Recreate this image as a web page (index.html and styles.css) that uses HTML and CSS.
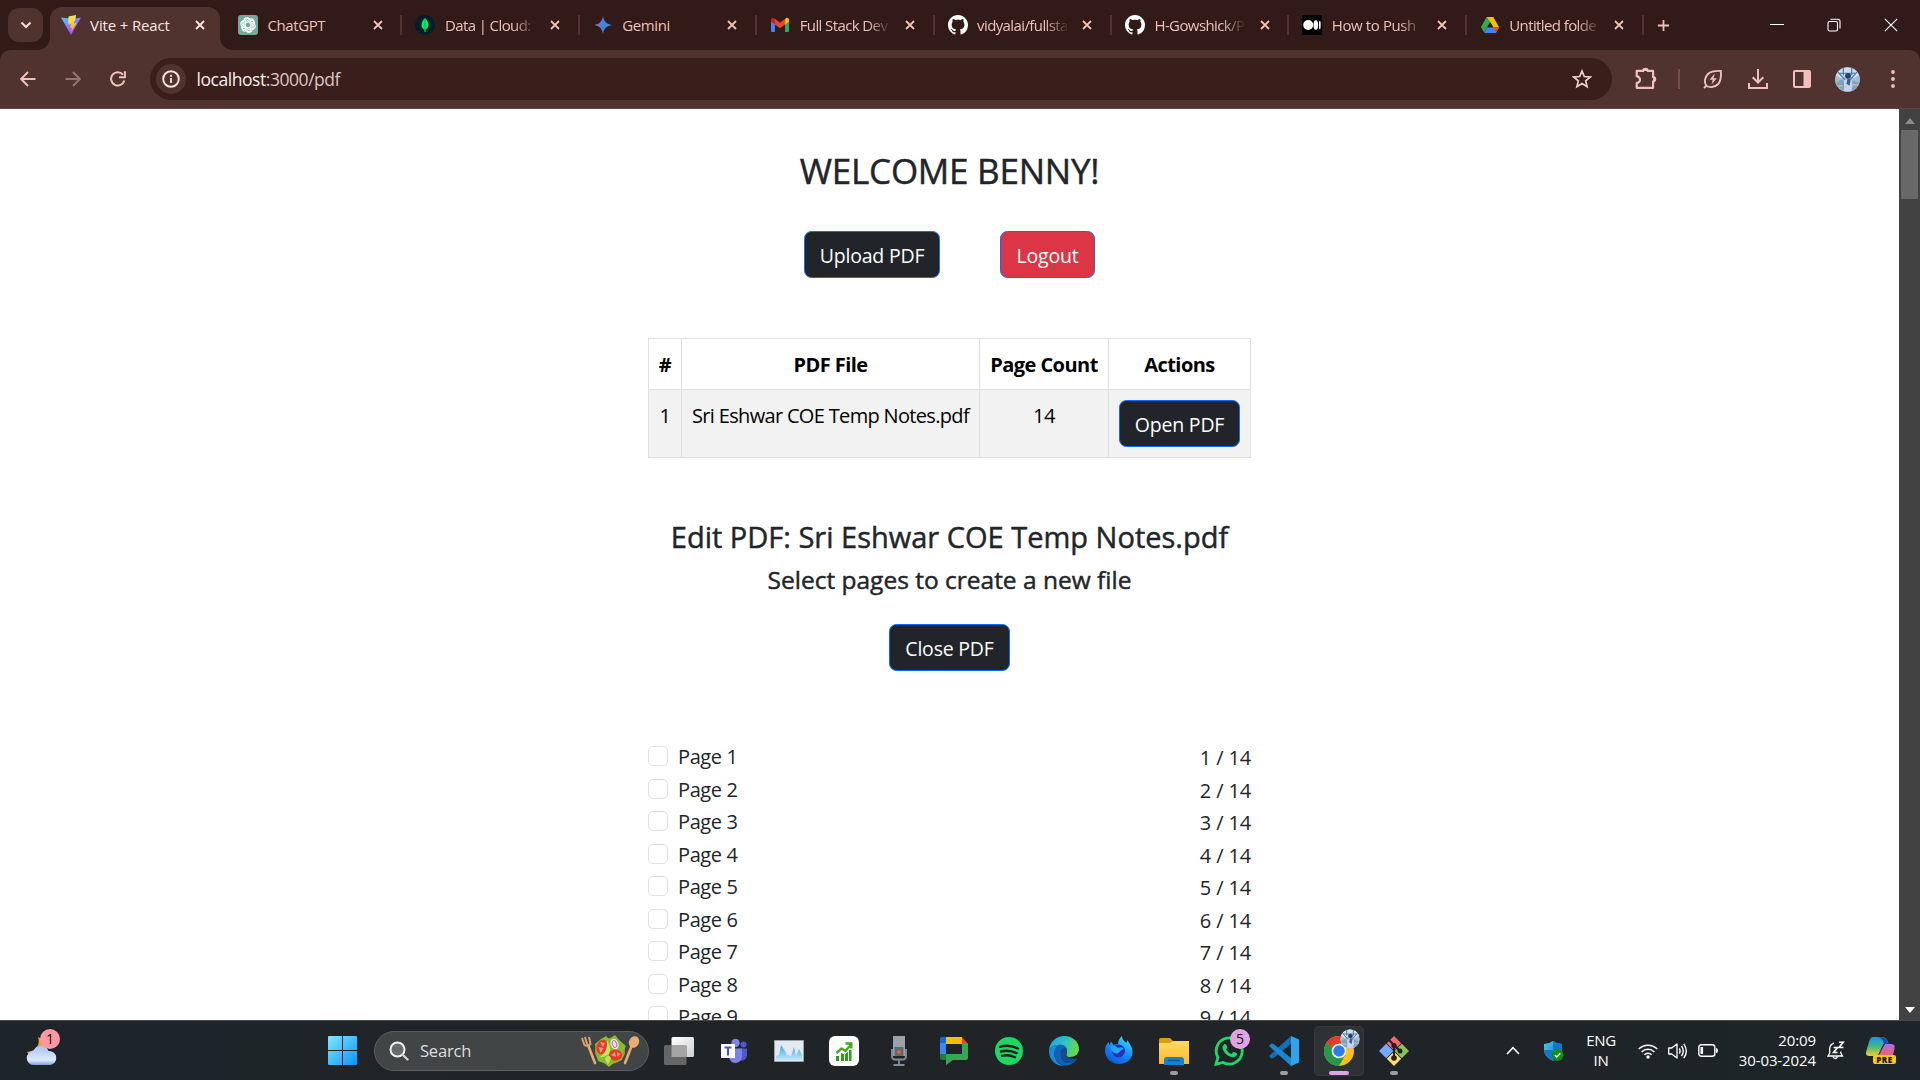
FILE: index.html
```html
<!DOCTYPE html>
<html lang="en">
<head>
<meta charset="utf-8">
<title>Vite + React</title>
<link rel="stylesheet" href="styles.css">
</head>
<body>
<svg class="defs" width="0" height="0" aria-hidden="true">
  <defs>
    <linearGradient id="viteA" x1="0" y1="0" x2="0.6" y2="1"><stop offset="0" stop-color="#41d1ff"/><stop offset="1" stop-color="#bd34fe"/></linearGradient>
    <linearGradient id="viteB" x1="0" y1="0" x2="0" y2="1"><stop offset="0" stop-color="#ffea63"/><stop offset="1" stop-color="#ffa800"/></linearGradient>
    <linearGradient id="gem" x1="0" y1="0" x2="1" y2="0"><stop offset="0" stop-color="#a06bc0"/><stop offset=".5" stop-color="#4a7fdc"/><stop offset="1" stop-color="#1ba1e3"/></linearGradient>
    <linearGradient id="win" x1="0" y1="0" x2="1" y2="1"><stop offset="0" stop-color="#7eeaff"/><stop offset="1" stop-color="#0a92fb"/></linearGradient>
    <linearGradient id="cloud" x1="0" y1="0" x2="0" y2="1"><stop offset="0" stop-color="#a4c2f4"/><stop offset=".75" stop-color="#dfe9fb"/><stop offset="1" stop-color="#7f9fdc"/></linearGradient>
    <linearGradient id="edgeA" x1="0" y1="0" x2="1" y2=".4"><stop offset="0" stop-color="#1f9fdc"/><stop offset=".55" stop-color="#2cc3c6"/><stop offset="1" stop-color="#64d84a"/></linearGradient>
    <linearGradient id="fox" x1=".8" y1="0" x2=".2" y2="1"><stop offset="0" stop-color="#37e3ff"/><stop offset=".5" stop-color="#168cf8"/><stop offset="1" stop-color="#0b52d8"/></linearGradient>
    <linearGradient id="folder" x1="0" y1="0" x2="0" y2="1"><stop offset="0" stop-color="#ffd965"/><stop offset="1" stop-color="#fbb92b"/></linearGradient>
    <linearGradient id="panel" x1="0" y1="0" x2="1" y2="1"><stop offset="0" stop-color="#ffffff"/><stop offset="1" stop-color="#cfcfcf"/></linearGradient>
    <linearGradient id="wave" x1="0" y1="0" x2="0" y2="1"><stop offset="0" stop-color="#3aa6e4"/><stop offset="1" stop-color="#b9e9fd"/></linearGradient>
    <linearGradient id="copA" x1="0" y1="0" x2="0" y2="1"><stop offset="0" stop-color="#1b8fe8"/><stop offset=".5" stop-color="#41b98a"/><stop offset="1" stop-color="#f3cf2b"/></linearGradient>
    <linearGradient id="copB" x1="0" y1="0" x2="0" y2="1"><stop offset="0" stop-color="#a96cf0"/><stop offset="1" stop-color="#f2606c"/></linearGradient>
    <linearGradient id="shield" x1="0" y1="0" x2="1" y2="1"><stop offset="0" stop-color="#4fc8f5"/><stop offset="1" stop-color="#0866b8"/></linearGradient>
    <symbol id="x" viewBox="0 0 10 10"><path d="M1 1l8 8M9 1L1 9" stroke="currentColor" stroke-width="1.8" fill="none"/></symbol>
    <symbol id="github" viewBox="0 0 16 16"><path fill="#fff" d="M8 0C3.58 0 0 3.58 0 8c0 3.54 2.29 6.53 5.47 7.59.4.07.55-.17.55-.38 0-.19-.01-.82-.01-1.49-2.01.37-2.53-.49-2.69-.94-.09-.23-.48-.94-.82-1.13-.28-.15-.68-.52-.01-.53.63-.01 1.08.58 1.23.82.72 1.21 1.87.87 2.33.66.07-.52.28-.87.51-1.07-1.78-.2-3.64-.89-3.64-3.95 0-.87.31-1.59.82-2.15-.08-.2-.36-1.02.08-2.12 0 0 .67-.21 2.2.82.64-.18 1.32-.27 2-.27s1.36.09 2 .27c1.53-1.04 2.2-.82 2.2-.82.44 1.1.16 1.92.08 2.12.51.56.82 1.27.82 2.15 0 3.07-1.87 3.75-3.65 3.95.29.25.54.73.54 1.48 0 1.07-.01 1.93-.01 2.2 0 .21.15.46.55.38A8.01 8.01 0 0 0 16 8c0-4.42-3.58-8-8-8z"/></symbol>
    <symbol id="avatar" viewBox="0 0 24 24">
      <circle cx="12" cy="12" r="12" fill="#a3bdd6"/>
      <path d="M1 8a12 12 0 0 1 22 0l-5 3-6-4-6 4z" fill="#cfe0ec"/>
      <path d="M3 5l8 9M21 5l-8 9M8 1v7M16 1v7M4 6h16" stroke="#4477a8" stroke-width="1.1"/>
      <path d="M1 15l5-3 4 2-2 8a12 12 0 0 1-7-7zM23 15l-6-2-2 4 2 6a12 12 0 0 0 6-8z" fill="#7d9fc8"/>
      <path d="M8.500 13l3.500-2 4 2 1 5-2 5H9z" fill="#c6d6e8"/>
      <circle cx="12.500" cy="8.500" r="2.800" fill="#27406c"/>
      <path d="M12 11l3 1-1 6-3-2z" fill="#3d5c96"/>
      <path d="M3 18h4M17 17h5" stroke="#c6c08e" stroke-width="1.600"/>
    </symbol>
  </defs>
</svg>

<header class="chrome">
  <div class="tabstrip">
    <button class="tab-search"><svg width="12" height="8" viewBox="0 0 12 8"><path d="M1.500 1.500L6 6l4.500-4.500" fill="none" stroke="currentColor" stroke-width="2"/></svg></button>
    <nav class="tabs">
      <div class="tab active">
        <svg class="fav" viewBox="0 0 20 20"><path d="M0 2.500l8 1 3 .5 9-1.500L10 20z" fill="url(#viteA)"/><path d="M15 0L7.500 1.500 7 9.500l3-.5-1 4 2-.5-1 4.500 5.500-9-3 .500 2-4.500z" fill="url(#viteB)"/></svg>
        <span class="title">Vite + React</span><svg class="close"><use href="#x"/></svg>
      </div>
      <div class="tab">
        <svg class="fav" viewBox="0 0 20 20"><rect width="20" height="20" rx="3" fill="#74aa9c"/><g fill="none" stroke="#fff" stroke-width="1.100"><path id="kn" d="M7.200 11.600V6.200a3 3 0 0 1 5.600-1.300M7.200 6.800l4.600-2.600a3 3 0 0 1 4.200 3.600"/><use href="#kn" transform="rotate(60 10 10)"/><use href="#kn" transform="rotate(120 10 10)"/><use href="#kn" transform="rotate(180 10 10)"/><use href="#kn" transform="rotate(240 10 10)"/><use href="#kn" transform="rotate(300 10 10)"/></g></svg>
        <span class="title">ChatGPT</span><svg class="close"><use href="#x"/></svg>
      </div>
      <div class="tab">
        <svg class="fav" viewBox="0 0 20 20"><circle cx="10" cy="10" r="10" fill="#001e2b"/><path d="M10 3c2.500 2.500 3.700 4.800 3.500 7.300-.2 2.200-1.500 3.700-3 4.700V17h-1v-2c-1.600-1-2.900-2.700-3-4.700C6.400 7.800 7.600 5.500 10 3z" fill="#00ed64"/><path d="M10 4v12.500" stroke="#00a848" stroke-width=".8"/></svg>
        <span class="title fade tight">Data | Cloud:</span><svg class="close"><use href="#x"/></svg>
      </div>
      <div class="tab">
        <svg class="fav" viewBox="0 0 20 20"><path d="M10 1c.9 5.500 3.500 8.100 9 9-5.500.9-8.100 3.500-9 9-.9-5.500-3.500-8.100-9-9 5.500-.9 8.100-3.500 9-9z" fill="url(#gem)"/></svg>
        <span class="title">Gemini</span><svg class="close"><use href="#x"/></svg>
      </div>
      <div class="tab">
        <svg class="fav" viewBox="0 0 20 20"><path d="M1 5v11a1 1 0 0 0 1 1h3V8z" fill="#4285f4"/><path d="M19 5v11a1 1 0 0 1-1 1h-3V8z" fill="#34a853"/><path d="M15 4.500v5l4-3V4.800c0-2-2.200-2.500-3.400-1.500z" fill="#fbbc04"/><path d="M1 6.500V4.800c0-2 2.200-2.500 3.400-1.500L5 4v5.500z" fill="#c5221f"/><path d="M5 3.800l5 3.900 5-3.900v5.700l-5 3.800-5-3.800z" fill="#ea4335"/></svg>
        <span class="title fade tight">Full Stack Dev</span><svg class="close"><use href="#x"/></svg>
      </div>
      <div class="tab">
        <svg class="fav"><use href="#github"/></svg>
        <span class="title fade tight">vidyalai/fullsta</span><svg class="close"><use href="#x"/></svg>
      </div>
      <div class="tab">
        <svg class="fav"><use href="#github"/></svg>
        <span class="title fade tight">H-Gowshick/P</span><svg class="close"><use href="#x"/></svg>
      </div>
      <div class="tab">
        <svg class="fav" viewBox="0 0 20 20"><rect width="20" height="20" rx="1" fill="#000"/><circle cx="6.200" cy="10" r="5" fill="#fff"/><ellipse cx="13.800" cy="10" rx="2.300" ry="4.700" fill="#fff"/><ellipse cx="17.800" cy="10" rx=".9" ry="4.200" fill="#fff"/></svg>
        <span class="title fade">How to Push</span><svg class="close"><use href="#x"/></svg>
      </div>
      <div class="tab">
        <svg class="fav" viewBox="0 0 20 20"><path d="M6.700 2h6.600l-3.300 5.600L4.200 17.500.9 12z" fill="#34a853"/><path d="M7 2h6.300l5.800 10.300h-5.600z" fill="#fbbc04"/><path d="M4.200 18l3-5.700h11.900L15.800 18z" fill="#4285f4"/><path d="M13.500 12.300h5.600L15.800 18z" fill="#ea4335"/><path d="M10 7.600l2.700 4.700H7.300z" fill="#311a17"/></svg>
        <span class="title fade tight">Untitled folde</span><svg class="close"><use href="#x"/></svg>
      </div>
    </nav>
    <svg class="new-tab" viewBox="0 0 14 14"><path d="M7 1v12M1 7h12" stroke="currentColor" stroke-width="1.900"/></svg>
    <div class="win-controls">
      <svg width="14" height="14" viewBox="0 0 14 14"><path d="M0 6.500h14" stroke="#fff"/></svg>
      <svg width="14" height="14" viewBox="0 0 14 14"><rect x="1" y="3.500" width="9.500" height="9.500" rx="1.500" fill="none" stroke="#fff" stroke-width="1.100"/><path d="M3.500 1.200H11a2 2 0 0 1 2 2v7.300" fill="none" stroke="#fff" stroke-width="1.100"/></svg>
      <svg width="14" height="14" viewBox="0 0 14 14"><path d="M.8.8l12.400 12.400M13.200.8L.8 13.200" stroke="#fff" stroke-width="1.100"/></svg>
    </div>
  </div>
  <div class="toolbar">
    <svg class="nav-ic" viewBox="0 0 16 16"><path d="M15.500 8H1.500M8 1L1.200 8 8 15" fill="none" stroke="currentColor" stroke-width="2"/></svg>
    <svg class="nav-ic dim" viewBox="0 0 16 16"><path d="M.5 8h14M8 1l6.800 7L8 15" fill="none" stroke="currentColor" stroke-width="2"/></svg>
    <svg class="nav-ic" viewBox="0 0 16 16"><path d="M14.300 9.500A6.700 6.700 0 1 1 13 3.600M14.900.3v5.900H9" fill="none" stroke="currentColor" stroke-width="2"/></svg>
    <div class="omnibox">
      <span class="site-info"><svg width="18" height="18" viewBox="0 0 18 18"><circle cx="9" cy="9" r="7.800" fill="none" stroke="currentColor" stroke-width="1.900"/><path d="M9 8v5M9 4.800v1.900" stroke="currentColor" stroke-width="1.800"/></svg></span>
      <span class="url"><b>localhost</b>:3000/pdf</span>
      <svg class="star" viewBox="0 0 20 20"><path d="M10 2l2.300 5.500 6 .5-4.600 3.900 1.400 5.800L10 14.600l-5.100 3.100 1.400-5.800L1.700 8l6-.5z" fill="none" stroke="currentColor" stroke-width="1.700"/></svg>
    </div>
    <svg class="ext" viewBox="0 0 22 22"><path d="M2.500 4.500H8.500a2 2 0 0 1 4 0H17.500V10.200a1.900 1.900 0 0 1 0 3.800V20H2.500v-4.500a3 3 0 0 0 0-6z" fill="none" stroke="currentColor" stroke-width="2" stroke-linejoin="round"/><path d="M8.300 4.500a2.200 2.200 0 0 1 4.400 0zM17.500 10a2.100 2.100 0 0 1 0 4.200z" fill="currentColor"/></svg>
    <i class="tb-sep"></i>
    <svg class="ic20 leaf" viewBox="0 0 20 20"><path d="M3.500 17c-3-4-1.500-9 1.500-12 3-2.700 8-3.300 12.800-3 .500 5 .2 9.800-2.600 13-3 3-7.700 4-11.700 2zM1 19l2.500-2.500" fill="none" stroke="currentColor" stroke-width="1.900"/><path d="M11.800 4.500L6.500 10.800h3.200L8.500 15.500l5.300-6.300h-3.300z" fill="currentColor"/></svg>
    <svg class="ic20 down" viewBox="0 0 20 20"><path d="M10 0v13M4.700 8.200L10 13.500l5.300-5.300M1 14v5h18v-5" fill="none" stroke="currentColor" stroke-width="2"/></svg>
    <svg class="ic18 side" viewBox="0 0 18 18"><rect x="1" y="1" width="16" height="16" rx="1" fill="none" stroke="currentColor" stroke-width="2"/><path d="M10.500 1H17v16h-6.500z" fill="currentColor"/></svg>
    <svg class="profile"><use href="#avatar"/></svg>
    <svg class="dots" viewBox="0 0 4 18"><circle cx="2" cy="2" r="1.900"/><circle cx="2" cy="9" r="1.900"/><circle cx="2" cy="16" r="1.900"/></svg>
  </div>
</header>

<section class="viewport">
  <main class="page">
    <h2 class="welcome">WELCOME BENNY!</h2>
    <div class="actions">
      <button class="btn dark w-upload">Upload PDF</button>
      <button class="btn danger w-logout">Logout</button>
    </div>
    <table class="files">
      <colgroup><col class="c-num"><col class="c-file"><col class="c-count"><col class="c-act"></colgroup>
      <thead><tr><th>#</th><th>PDF File</th><th>Page Count</th><th>Actions</th></tr></thead>
      <tbody><tr><td>1</td><td class="fname">Sri Eshwar COE Temp Notes.pdf</td><td>14</td><td class="act"><button class="btn dark w-open">Open PDF</button></td></tr></tbody>
    </table>
    <h4 class="edit-title">Edit PDF: Sri Eshwar COE Temp Notes.pdf</h4>
    <h5 class="edit-sub">Select pages to create a new file</h5>
    <button class="btn dark w-open close-pdf">Close PDF</button>
    <ul class="pages">
      <li><i class="check"></i><span>Page 1</span><em>1 / 14</em></li>
      <li><i class="check"></i><span>Page 2</span><em>2 / 14</em></li>
      <li><i class="check"></i><span>Page 3</span><em>3 / 14</em></li>
      <li><i class="check"></i><span>Page 4</span><em>4 / 14</em></li>
      <li><i class="check"></i><span>Page 5</span><em>5 / 14</em></li>
      <li><i class="check"></i><span>Page 6</span><em>6 / 14</em></li>
      <li><i class="check"></i><span>Page 7</span><em>7 / 14</em></li>
      <li><i class="check"></i><span>Page 8</span><em>8 / 14</em></li>
      <li><i class="check"></i><span>Page 9</span><em>9 / 14</em></li>
    </ul>
  </main>
  <aside class="scrollbar">
    <svg width="10" height="6" viewBox="0 0 10 6"><path d="M0 6l5-6 5 6z" fill="#8b8b8b"/></svg>
    <div class="thumb"></div>
    <svg class="sb-down" width="10" height="6" viewBox="0 0 10 6"><path d="M0 0l5 6 5-6z" fill="#fff"/></svg>
  </aside>
</section>

<footer class="taskbar">
  <div class="weather">
    <svg width="32" height="32" viewBox="0 0 32 32"><path d="M12 2c2.500 7-1 14-11 15 4 6 14 6 17-1s-1-12-6-14z" fill="#f7a325"/><path d="M8 30a7 7 0 0 1-.5-14 8 8 0 0 1 15 0A7 7 0 0 1 24 30z" fill="url(#cloud)"/></svg>
    <span class="badge pink">1</span>
  </div>
  <div class="center">
    <svg class="start" viewBox="0 0 29 29"><path d="M1 0h13v14H0V1a1 1 0 0 1 1-1zM15 0h13a1 1 0 0 1 1 1v13H15zM0 15h14v14H1a1 1 0 0 1-1-1zM15 15h14v13a1 1 0 0 1-1 1H15z" fill="url(#win)"/></svg>
    <div class="search">
      <svg width="20" height="20" viewBox="0 0 20 20"><circle cx="8.500" cy="8.500" r="7" fill="#666b6d" stroke="#f0f0f0" stroke-width="2"/><path d="M13.500 13.500l5 5" stroke="#d0d0d0" stroke-width="2.400" stroke-linecap="round"/></svg>
      <span>Search</span>
      <svg class="salad" viewBox="0 0 60 32">
        <path d="M8 10l7 18" stroke="#e5ab70" stroke-width="2.600" stroke-linecap="round"/><path d="M2 3l2.500 7q4 2 6-1L9 2M5 2l2 7" fill="none" stroke="#dba06a" stroke-width="2"/>
        <path d="M52 10l-7 18" stroke="#e5ab70" stroke-width="2.600" stroke-linecap="round"/><ellipse cx="54" cy="7" rx="5" ry="6" transform="rotate(25 54 7)" fill="#e8ae72"/>
        <ellipse cx="30" cy="16" rx="15" ry="13" fill="#b98a4a"/>
        <path d="M15 9l6-5 5-3 3 3 6-4 5 6 6 5-3 6-1 8-7 2-6 5-5-4-6-2-2-8z" fill="#86bd2e"/>
        <ellipse cx="22" cy="12" rx="5.500" ry="7.500" transform="rotate(18 22 12)" fill="#dd3f2b"/><path d="M20 7l5 1-2 4zM18.500 12l5 1-3 5z" fill="#f7947d"/>
        <ellipse cx="35.500" cy="20" rx="6.500" ry="5.500" fill="#dc3c2b"/><path d="M31 20l4-3 1 5zM37 17l3.500 2-3 3z" fill="#f58e78"/>
        <ellipse cx="34.500" cy="9" rx="4" ry="5.500" transform="rotate(-20 34.500 9)" fill="#efdcec"/><ellipse cx="34.500" cy="9" rx="2.200" ry="3.700" transform="rotate(-20 34.500 9)" fill="none" stroke="#a2648f" stroke-width=".8"/>
        <path d="M27 5q5 8 2 14-6 4-9 3 8-5 7-17zM25 24q3-6 6-1l-3 7z" fill="#c8e05a"/>
      </svg>
    </div>
    <div class="apps">
      <span class="app"><svg viewBox="0 0 30 30"><rect x="7.500" y="1" width="22.500" height="20" rx="1.500" fill="url(#panel)"/><rect x="0" y="9" width="22.500" height="20" rx="1.500" fill="#666"/><path d="M7.500 9h15v12h-15z" fill="#a5a5a5"/></svg></span>
      <span class="app"><svg viewBox="0 0 30 30"><circle cx="16.500" cy="7" r="4.200" fill="#7b83eb"/><circle cx="24.500" cy="8.500" r="3" fill="#5059c9"/><path d="M20 12.500h8v7a5 5 0 0 1-8 4z" fill="#5059c9"/><path d="M10 12.500h13V20a6.500 6.500 0 0 1-13 1z" fill="#7b83eb"/><path d="M2 8h14v14H2z" fill="#fff"/><path d="M5.500 11.500h7M9 11.500v8" stroke="#4b53bc" stroke-width="2"/></svg></span>
      <span class="app"><svg viewBox="0 0 30 30"><path d="M.5 4.500h29v21H.5z" fill="#e3eaef" stroke="#99a3ab"/><path d="M2 24v-4l3-1 2-10 4 6 2 4 4 1 3-9 2 9 3-7 3 6v5z" fill="url(#wave)"/></svg></span>
      <span class="app"><svg viewBox="0 0 30 30"><rect width="30" height="30" rx="6" fill="#fff"/><path d="M7 25v-5h3v5zM12 25v-8l3 1v7zM16 25v-7l3-2v9zM20 25V14h2.500v11z" fill="#2f9a1c"/><path d="M7.500 17l5-4.500 4 2.500 5-6M16.500 7.500h5.800v5" fill="none" stroke="#3fae1b" stroke-width="2.400"/></svg></span>
      <span class="app"><svg viewBox="0 0 30 30"><path d="M9 0h12v20H9z" fill="#9aa3ac"/><path d="M10.500 11h9v9h-9z" fill="#5f6974"/><path d="M8 13v7q0 3.500 3 3.500h8q3 0 3-3.500v-7M15 24v5M9.500 29h11" fill="none" stroke="#818b97" stroke-width="1.900"/><circle cx="15" cy="16" r="2" fill="#f4601d"/></svg></span>
      <span class="app"><svg viewBox="0 0 30 30"><path d="M7 1h16v7H7z" fill="#fbbc04"/><path d="M1 3a2 2 0 0 1 2-2h4v7H1z" fill="#1967d2"/><path d="M1 7h6v11H1z" fill="#4285f4"/><path d="M23 1l6 7h-6z" fill="#ea4335"/><path d="M7 18h16V7h6v15a2 2 0 0 1-2 2H14l-7 5z" fill="#34a853"/><path d="M1 18h6v6H3a2 2 0 0 1-2-2z" fill="#188038"/></svg></span>
      <span class="app"><svg viewBox="0 0 30 30"><circle cx="15" cy="15" r="14" fill="#1ed760"/><path d="M6 10.800q9.500-2.800 18 1.700M7 15.500q8-2.200 15.500 1.600M8 19.800q7-1.600 13 1.400" fill="none" stroke="#1d2124" stroke-width="2.400" stroke-linecap="round"/></svg></span>
      <span class="app"><svg viewBox="0 0 30 30"><path d="M0 14C1 5 8 0 15 0c9 0 15 6 15 13 0 5-4 8-9 8-4 0-4-2-3-4 1-4-3-8-8-8-6 0-9 3-10 5z" fill="url(#edgeA)"/><path d="M0 14c2-4 6-5.500 10-5-3 2-4.500 5-4.500 9 0 6 4 10.500 9.500 12C6 30-.5 23 0 14z" fill="#1b8ad9"/><path d="M10 8.500c-4 3-6 8-4 13 2 6 8 9.500 14 7.500 4-1.300 7-4 8.200-6.500-6 2.500-12-.5-12-5 0-1.500 1.500-2 1.800-3.500.3-3-3-5.500-8-5.500z" fill="#0f62b4"/><path d="M11.500 17c0-2.500 1.500-4.500 4.500-5 2 1 2.500 3 1.500 5-1.500 3 2 6.500 10.700 5.500C24 28 17 28 14 25c-2-2-2.500-5-2.500-8z" fill="#104b93"/></svg></span>
      <span class="app"><svg viewBox="0 0 30 30"><path d="M1 15c0-4 1.500-7 3.500-9l1 3 1.500-3.500L9.500 9 14 8c0-3 1.500-6 4-8 0 4 2.500 5 4.500 7l1-3c1 3 5 6 5 12 0 7-6 12-13.500 12S1 22 1 15z" fill="url(#fox)"/><circle cx="14.500" cy="15" r="6.500" fill="#2a2fb6"/><path d="M7 10c3-1 5 0 7 2 3-1 5 0 6 1-3 0-4 4-7 4.500-4 0-6.500-3-6-7.500z" fill="#20a7f8"/></svg></span>
      <span class="app run"><svg viewBox="0 0 30 30"><path d="M0 4a2 2 0 0 1 2-2h9l3 3-3 4H0z" fill="#dc9b15"/><path d="M0 7h11l3-2h16v23H0z" fill="url(#folder)"/><path d="M5 29v-5a3 3 0 0 1 3-3h14a3 3 0 0 1 3 3v5z" fill="#1582cf"/><path d="M9 24.500h12" stroke="#0b57a0" stroke-width="1.400"/></svg></span>
      <span class="app"><svg viewBox="0 0 30 30"><path d="M2 28.200l1.900-6.800A13 13 0 1 1 9 26.400z" fill="none" stroke="#25d366" stroke-width="2.800"/><path d="M10 8.500c1-.8 2-.5 2.500.6l.8 2c.3.8-.8 1.700-1.200 2.200 1.300 2.400 3 3.800 5.300 4.800l1.800-2c.5-.5 3.300.8 3.700 1.200.4 3-2.400 4.300-4.200 4-5-.7-9.700-5.200-10.200-9.300-.1-1.400.5-2.700 1.500-3.500z" fill="#25d366"/></svg><b class="badge lilac">5</b></span>
      <span class="app run"><svg viewBox="0 0 30 30"><path d="M22 0l8 3.500v23L22 30z" fill="#2fa4ee"/><path d="M22 0v8L4.500 22 2 22.500 0 20z" fill="#0f6fb6"/><path d="M0 10l2.500-2.500L4.500 8 22 22v8z" fill="#1b87d0"/></svg></span>
      <span class="app current"><svg viewBox="0 0 30 30"><circle cx="15" cy="15" r="15" fill="#fbc116"/><path d="M15 15L2 7.500A15 15 0 0 1 28 7.500H15z" fill="#e33b2e"/><path d="M2 7.500A15 15 0 0 0 15 30l6.500-11.200L15 15z" fill="#269846"/><circle cx="15" cy="15" r="7.300" fill="#fff"/><circle cx="15" cy="15" r="5.800" fill="#2f7bea"/></svg><svg class="badge pic"><use href="#avatar"/></svg></span>
      <span class="app run"><svg viewBox="0 0 30 30"><path d="M15 0l7.200 7.200L15 14.400 7.800 7.200z" fill="#f5676b"/><path d="M22.800 7.800L30 15l-7.200 7.200-7.200-7.200z" fill="#8dc25b"/><path d="M7.200 7.800l7.200 7.200-7.200 7.200L0 15z" fill="#74a9fb"/><path d="M15 15.600l7.200 7.200L15 30l-7.200-7.200z" fill="#ffdc6b"/><path d="M10 4l5 5v14M15 9l6 6" stroke="#1f2427" stroke-width="2" fill="none"/><circle cx="15" cy="9.500" r="2.600" fill="#1f2427"/><circle cx="15" cy="22" r="2.800" fill="#1f2427"/><circle cx="21" cy="15" r="2.500" fill="#1f2427"/></svg></span>
    </div>
  </div>
  <div class="tray">
    <svg class="t-up" width="14" height="9" viewBox="0 0 14 9"><path d="M1 8l6-6.300L13 8" fill="none" stroke="#fff" stroke-width="1.600"/></svg>
    <svg class="t-shield" width="20" height="20" viewBox="0 0 20 20"><path d="M9 0q4 3 9 3v6q0 7-9 11Q0 16 0 9V3q5 0 9-3z" fill="url(#shield)"/><path d="M0 9h9v11Q1 16 0 9zM9 0q4 3 9 3v6H9z" fill="#1277c9"/><circle cx="13.500" cy="14" r="6" fill="#0f8c1a"/><path d="M10.800 14l2 2 3.500-3.800" fill="none" stroke="#fff" stroke-width="1.400"/></svg>
    <div class="lang"><span>ENG</span><span>IN</span></div>
    <svg class="t-wifi" width="20" height="16" viewBox="0 0 20 16"><path d="M.8 6a13 13 0 0 1 18.400 0M3.600 9a9 9 0 0 1 12.800 0M6.400 11.700a5 5 0 0 1 7.200 0" fill="none" stroke="#fff" stroke-width="1.500"/><circle cx="10" cy="14" r="1.700" fill="#fff"/></svg>
    <svg class="t-vol" width="20" height="18" viewBox="0 0 20 18"><path d="M.7 6v6h3L9 16V2L3.700 6z" fill="none" stroke="#fff" stroke-width="1.300" stroke-linejoin="round"/><path d="M11.300 6.500q1.600 2.500 0 5M13.500 4q3.500 5 0 10M15.800 1.800q5 7.200 0 14.400" fill="none" stroke="#fff" stroke-width="1.400"/></svg>
    <svg class="t-bat" width="20" height="13" viewBox="0 0 20 13"><rect x=".8" y=".8" width="16" height="11.400" rx="2.500" fill="none" stroke="#fff" stroke-width="1.400"/><path d="M2.500 3h2.600v7H2.500zM18 4q2 0 2 2.500T18 9z" fill="#fff"/></svg>
    <div class="clock"><span>20:09</span><span>30-03-2024</span></div>
    <svg class="t-bell" width="18" height="19" viewBox="0 0 18 19"><path d="M7 2.200Q2.700 3.500 2.700 8v4L1 15h14.500l-1.700-3v-1.500M6 16q2 3 4.500 0" fill="none" stroke="#fff" stroke-width="1.300"/><path d="M6.500 6.500h4l-4 5h4M12 1.200h4.300L12 6.500h4.500" fill="none" stroke="#fff" stroke-width="1.600"/></svg>
    <div class="copilot">
      <svg width="29" height="22" viewBox="0 0 29 22"><path d="M7 1h9q4 0 5.500 4L22.500 8h-5l-4 8q-1.500 4-4 4H3q-4 0-2.700-5l3-10Q4.500 1 7 1z" fill="url(#copA)"/><path d="M14 1q6 0 7.500 5l.8 2h-4Q16.500 2 12 1z" fill="#1746c2"/><path d="M19 8h6q4.500 0 3.500 4.500L27 19H11q3 0 4-4z" fill="url(#copB)"/></svg>
      <span class="pre">PRE</span>
    </div>
  </div>
</footer>
</body>
</html>
```
FILE: styles.css
```css
* { box-sizing: border-box; }
body {
  margin: 0;
  width: 1920px;
  height: 1080px;
  overflow: hidden;
  display: flex;
  flex-direction: column;
  font-family: "Open Sans", "Noto Sans", sans-serif;
  color: #212529;
  background: #fff;
}
.defs { position: absolute; }
svg { display: block; flex: none; }

/* Browser frame */
.chrome { flex: none; height: 109px; background: #311a17; color: #f0c1ba; }
.tabstrip { display: flex; height: 50px; align-items: center; }
.tab-search {
  width: 35px; height: 34px; margin: 0 3.600px 0 8px; padding: 0;
  border: 0; border-radius: 11px; background: #50322f; color: #f9dcd8;
  display: flex; align-items: center; justify-content: center;
}
.tabs { display: flex; height: 50px; }
.tab {
  position: relative; width: 177.400px; height: 50px;
  padding: 0 18.700px 0 14px; display: flex; align-items: center;
}
.tab:nth-child(n+2)::after {
  content: ""; position: absolute; right: -1px; top: 15px;
  width: 2px; height: 20px; background: #50322f;
}
.tab.active::before {
  content: ""; position: absolute; left: 3.400px; right: 4px; top: 7px; bottom: 0;
  background: #50322f; border-radius: 12px 12px 0 0;
}
.tab.active::after {
  content: ""; position: absolute; left: -8.600px; right: -8px; bottom: 0; height: 12px;
  background:
    radial-gradient(circle at 0 0, transparent 11.500px, #50322f 12px) left / 12px 12px no-repeat,
    radial-gradient(circle at 100% 0, transparent 11.500px, #50322f 12px) right / 12px 12px no-repeat;
}
.tab > * { position: relative; }
.tab.active { color: #fbe6e3; }
.fav { width: 20px; height: 20px; }
.title {
  width: 90px; margin-left: 9.500px; font-size: 15px; letter-spacing: -.4px;
  line-height: 24px; white-space: nowrap;
}
.fade {
  -webkit-mask-image: linear-gradient(90deg, #000 68px, transparent 92px);
  mask-image: linear-gradient(90deg, #000 68px, transparent 92px);
}
.tight { letter-spacing: -.6px; }
.active .title { letter-spacing: -.15px; }
.close { width: 10px; height: 10px; margin-left: auto; }
.new-tab { width: 13px; height: 13px; margin-left: 14px; }
.win-controls { display: flex; gap: 43px; margin: 0 22px 0 auto; }

.toolbar {
  height: 59px; padding-left: 20px; display: flex; align-items: center;
  background: #50322f; border-radius: 10px 10px 0 0;
  border-bottom: 1px solid #604340; color: #f0c1ba;
}
.nav-ic { width: 16px; height: 16px; margin-right: 29px; }
.nav-ic:nth-child(3) { margin-right: 24px; }
.dim { color: #947370; }
.omnibox {
  width: 1462px; height: 42px; border-radius: 21px; background: #3a1e1b;
  display: flex; align-items: center; padding: 0 20px 0 6px;
}
.site-info {
  width: 30px; height: 30px; border-radius: 50%; background: #50322f; color: #fbe6e3;
  display: flex; align-items: center; justify-content: center;
}
.url { margin-left: 10.500px; font-size: 17.500px; letter-spacing: -.45px; color: #d9c6c4; line-height: 24px; }
.url b { font-weight: 400; color: #fbeeec; }
.star { width: 20px; height: 20px; margin-left: auto; color: #e9d3d0; }
.ext { width: 24px; height: 24px; margin: -2px 20px 0 22px; }
.tb-sep { width: 2px; height: 20px; background: #75504b; margin-right: 23px; }
.ic20 { width: 20px; height: 20px; }
.ic18 { width: 18px; height: 18px; }
.down { margin-left: 25px; }
.side { margin-left: 25px; }
.profile { width: 25px; height: 25px; margin-left: 24px; }
.dots { width: 4px; height: 18px; margin-left: 31px; fill: #f0c1ba; }

/* Page */
.viewport { flex: 1; min-height: 0; display: flex; }
.page {
  flex: 1; display: flex; flex-direction: column; align-items: center;
  padding-top: 41px; font-size: 20px; line-height: 30px; overflow: hidden;
}
.page > * { flex: none; }
h2, h4, h5 { margin: 0; font-weight: 500; white-space: nowrap; -webkit-text-stroke: .45px currentColor; }
.welcome { font-size: 35px; line-height: 42px; letter-spacing: -.25px; }
.actions { display: flex; gap: 60px; margin: 39px 0 60px; }
.btn {
  display: block; height: 47px; padding: 3px 0 0; border: 1px solid #0d6efd;
  border-radius: 7.500px; color: #fff; font: inherit; font-size: 19.500px;
  letter-spacing: -.2px; white-space: nowrap;
}
.dark { background: #212529; }
.danger { background: #dc3545; }
.w-upload { width: 136px; }
.w-logout { width: 95px; }
.w-open { width: 121px; }
.files {
  width: 603px; border-collapse: collapse; table-layout: fixed;
  text-align: center; color: #000; letter-spacing: -.4px;
}
.files th, .files td { border: 1px solid #dee2e6; padding: 11px 0 9px; vertical-align: top; white-space: nowrap; }
.files th { font-weight: 700; letter-spacing: -.55px; }
.files td { background: #f2f2f2; }
.files .fname { letter-spacing: -.67px; }
.files .act { padding: 10px 0; }
.files .btn { margin: 0 auto; }
.c-num { width: 33px; }
.c-file { width: 298px; }
.c-count { width: 129px; }
.c-act { width: 142px; }
.edit-title { margin-top: 61px; font-size: 29px; line-height: 36px; letter-spacing: 0; }
.edit-sub { margin-top: 10px; font-size: 24.500px; line-height: 30px; letter-spacing: 0; }
.close-pdf { margin-top: 29px; }
.pages { list-style: none; width: 603px; margin: 71px 0 0; padding: 0; letter-spacing: -.4px; }
.pages li { display: flex; height: 32.500px; align-items: flex-start; }
.check { width: 20px; height: 20px; margin: 4px 10px 0 0; border: 1px solid #dee2e6; border-radius: 5px; }
.pages em { margin: 1px 0 0 auto; font-style: normal; letter-spacing: -.15px; }

.scrollbar {
  width: 21px; background: #424242; display: flex; flex-direction: column;
  align-items: center; padding: 9px 0 7px;
}
.thumb { width: 17px; height: 69px; margin-top: 6px; background: #686868; }
.sb-down { margin-top: auto; }

/* Taskbar */
.taskbar {
  flex: none; height: 60px; display: flex; color: #fff;
  background: linear-gradient(90deg, #1d252a, #202427 40%, #202428 70%, #1c2529);
  border-top: 1px solid #4a4a4a; align-items: center;
}
.weather { position: relative; margin-left: 26px; width: 35px; height: 32px; }
.badge {
  position: absolute; width: 20px; height: 20px; border-radius: 50%;
  color: #111; font-size: 14px; line-height: 20px; text-align: center; font-weight: 400;
}
.pink { left: 14px; top: -6px; background: #fd98a3; }
.lilac { left: 26px; top: 3px; background: #dfa2e4; }
.pic { left: 26px; top: 3px; }
.center { display: flex; align-items: center; margin-left: 267px; }
.start { width: 29px; height: 29px; }
.search {
  width: 275px; height: 40px; margin-left: 17px; border-radius: 20px;
  background: #414546; border: 1px solid #595d5e; display: flex; align-items: center; padding: 0 8px 0 13.500px;
}
.search span { margin-left: 11.500px; font-size: 16.500px; letter-spacing: -.2px; color: #dedede; }
.salad { width: 60px; height: 32px; margin-left: auto; }
.apps { display: flex; gap: 5px; margin-left: 5px; }
.app { position: relative; width: 50px; height: 50px; display: flex; align-items: center; justify-content: center; border-radius: 5px; }
.app > svg:first-child { width: 30px; height: 30px; }
.app.run::after, .app.current::after {
  content: ""; position: absolute; bottom: 1px; left: 21px; width: 8px; height: 4px;
  border-radius: 2px; background: #9c9d9e;
}
.app.current { background: #2e3235; box-shadow: inset 0 0 0 1px #36393c; }
.app.current::after { left: 15px; width: 20px; background: #dfa2e4; }
.tray { display: flex; align-items: center; margin: 0 25px 0 auto; font-size: 15px; line-height: 20px; letter-spacing: -.3px; }
.lang, .clock { display: flex; flex-direction: column; margin-top: -1px; }
.lang { width: 32px; text-align: center; margin-left: 21px; }
.t-shield { margin-left: 24px; }
.t-wifi { margin-left: 21px; }
.t-vol { margin-left: 10px; }
.t-bat { margin-left: 10px; }
.clock { width: 90px; margin-left: 8px; text-align: right; letter-spacing: -.1px; }
.t-bell { margin-left: 11px; }
.copilot { position: relative; margin-left: 21px; height: 29px; width: 29px; }
.pre {
  position: absolute; left: 7px; top: 19px; width: 23px; height: 9px; border-radius: 2px;
  background: #fbc914; color: #111; font-size: 8px; font-weight: 800; line-height: 9px;
  letter-spacing: .6px; text-align: center;
}
```
